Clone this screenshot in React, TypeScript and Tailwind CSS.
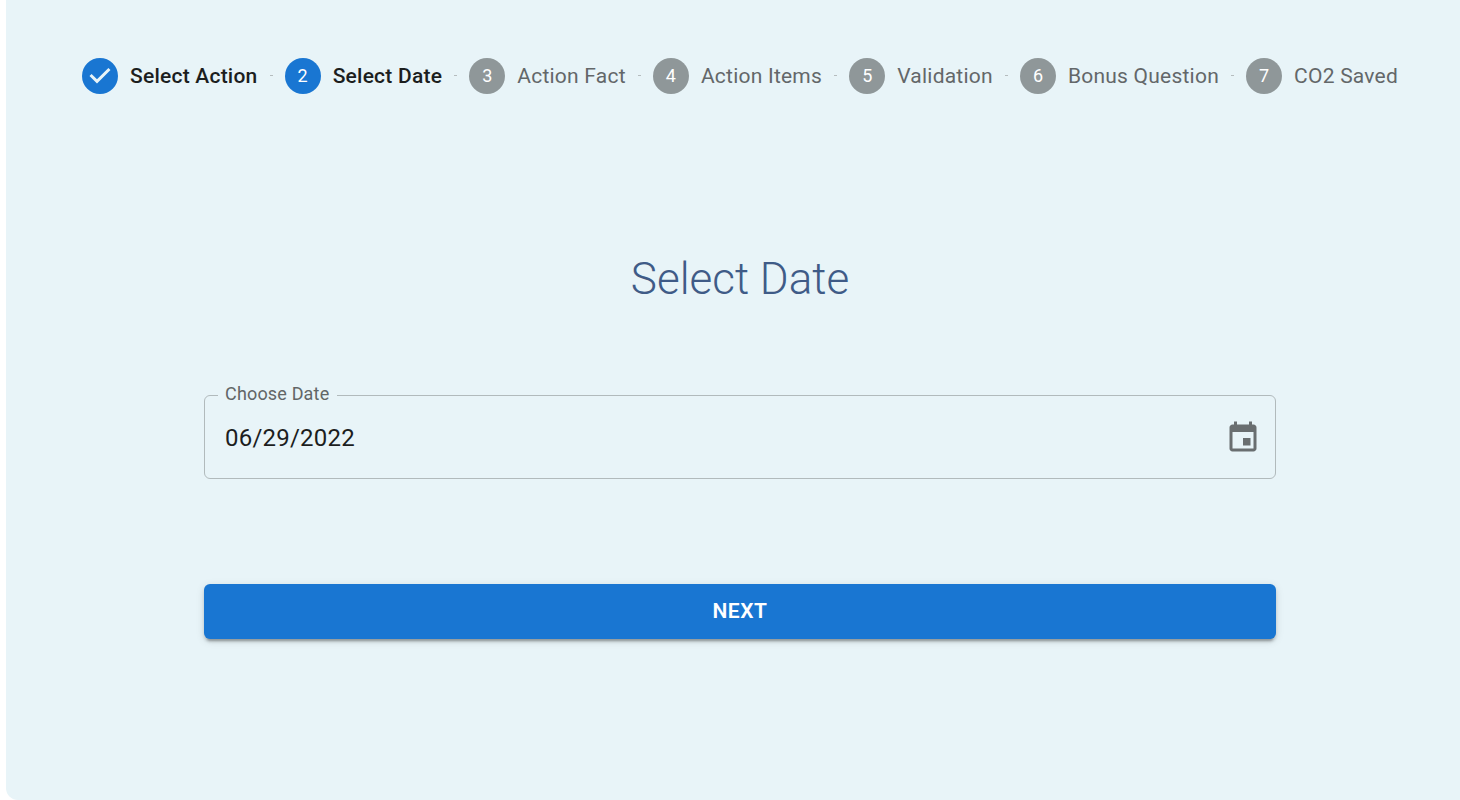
import { Fragment, useState } from "react";

const steps = [
  "Select Action",
  "Select Date",
  "Action Fact",
  "Action Items",
  "Validation",
  "Bonus Question",
  "CO2 Saved",
];

const current = 1;

function StepBadge({ index }: { index: number }) {
  if (index < current) {
    return (
      <svg viewBox="0 0 24 24" className="size-9 shrink-0 text-[#1976d2]" fill="currentColor" aria-label="Completed">
        <path d="M12 0a12 12 0 1 0 0 24 12 12 0 0 0 0-24zm-2 17l-5-5 1.4-1.4 3.6 3.6 7.6-7.6L19 8l-9 9z" />
      </svg>
    );
  }
  return (
    <span
      className={`flex size-9 shrink-0 items-center justify-center rounded-full text-lg text-white ${
        index === current ? "bg-[#1976d2]" : "bg-[#8f9799]"
      }`}
    >
      {index + 1}
    </span>
  );
}

function Stepper() {
  return (
    <ol className="mx-auto flex w-full max-w-[1340px] items-center">
      {steps.map((label, index) => (
        <Fragment key={label}>
          {index > 0 && <li aria-hidden="true" className="mb-px h-px flex-1 bg-[#b5bcbe]" />}
          <li
            aria-current={index === current ? "step" : undefined}
            className="flex items-center gap-3 px-3 whitespace-nowrap"
          >
            <StepBadge index={index} />
            <span
              className={`text-[21px] leading-[30px] tracking-[0.01071em] ${
                index <= current ? "font-medium text-[#1c1e1e]" : "text-[#636769]"
              }`}
            >
              {label}
            </span>
          </li>
        </Fragment>
      ))}
    </ol>
  );
}

export default function App() {
  const [date, setDate] = useState("06/29/2022");

  return (
    <div className="min-h-screen bg-white pl-1.5 font-[Roboto,sans-serif]">
      <main className="min-h-screen rounded-bl-xl bg-[#e8f4f8] pt-[58px] pl-3.5">
        <Stepper />
        <form className="mx-auto w-full max-w-[1072px]" onSubmit={(e) => e.preventDefault()}>
          <h1 className="mt-[157px] text-center text-[44px] leading-[56px] font-light text-[#3f5b87]">
            Select Date
          </h1>
          <fieldset className="mt-[77px] h-[95px] rounded-md border border-[#b1babc] pr-4">
            <legend className="ml-[13px] pr-2 pb-0.5 pl-[7px] text-lg leading-5 tracking-[0.00938em] text-[#626667]">
              <label htmlFor="date">Choose Date</label>
            </legend>
            <div className="flex items-center">
              <input
                id="date"
                type="text"
                value={date}
                onChange={(e) => setDate(e.target.value)}
                className="h-16 min-w-0 flex-1 bg-transparent pl-5 text-2xl tracking-[0.00938em] text-[#1c1e1e] outline-none"
              />
              <button type="button" aria-label="Choose date" className="text-[#696e70]">
                <svg viewBox="0 0 24 24" className="size-9 -mr-0.5" fill="currentColor">
                  <path d="M17 12h-5v5h5v-5zM16 1v2H8V1H6v2H5c-1.11 0-1.99.9-1.99 2L3 19c0 1.1.89 2 2 2h14c1.1 0 2-.9 2-2V5c0-1.1-.9-2-2-2h-1V1h-2zm3 18H5V8h14v11z" />
                </svg>
              </button>
            </div>
          </fieldset>
          <button
            type="submit"
            className="mt-[105px] h-[55px] w-full rounded-md bg-[#1976d2] text-[21px] font-semibold tracking-wide text-white uppercase shadow-[0_5px_2px_-3px_rgba(0,0,0,0.2),0_3px_3px_0_rgba(0,0,0,0.14),0_2px_8px_0_rgba(0,0,0,0.12)]"
          >
            Next
          </button>
        </form>
      </main>
    </div>
  );
}
